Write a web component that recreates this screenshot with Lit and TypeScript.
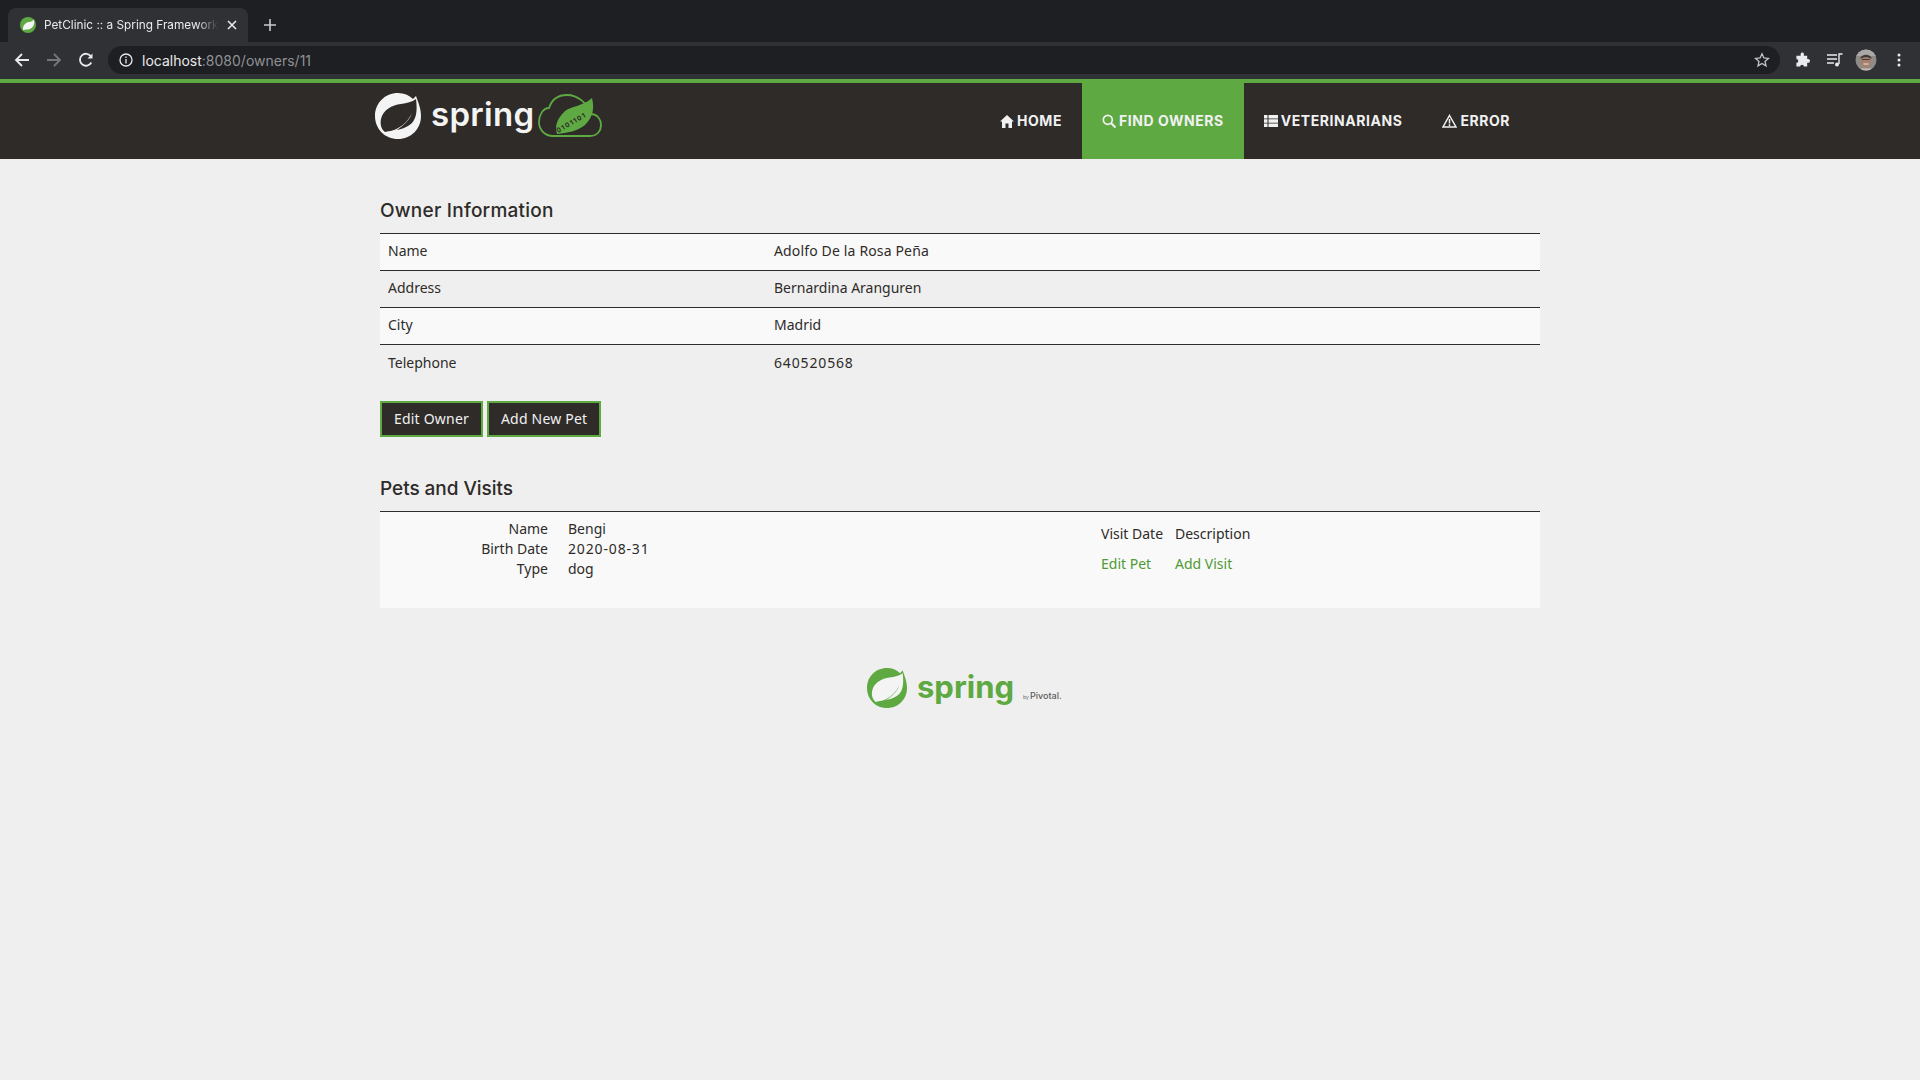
import { css, html, LitElement, svg } from "lit";
import { customElement } from "lit/decorators.js";

/** Leaf mark of the spring logo, drawn in a 46x46 box */
const leafMark = (disc: string, leaf: string) => svg`
  <path fill="${disc}" d="M41 3 C43 9 46 15 46 23 C46 36 36 46 23 46 C10 46 0 36 0 23 C0 10 10 0 23 0 C29 0 34 2 38 6 C39 5 40 4 41 3 Z" />
  <path fill="${leaf}" d="M41 6 C42 14 42.500 24 37 30 C30 37 19 37 10 39 C6 36 5 31 6 26 C8 17 17 12 26 11 C32 10 37 9 41 6 Z" />
  <path fill="${disc}" d="M8 41 C17 38 30 35 37 20 C34 30 22 38 11 42 Z" />
`;

@customElement("browser-chrome")
export class BrowserChrome extends LitElement {
  static styles = css`
    :host {
      display: block;
      font-family: "Inter", "Roboto", sans-serif;
      color: #e8eaed;
    }

    .tabstrip {
      height: 42px;
      box-sizing: border-box;
      background: #1e1f22;
      padding: 8px 0 0 8px;
      display: flex;
      align-items: stretch;
    }

    .tab {
      width: 240px;
      box-sizing: border-box;
      background: #303135;
      border-radius: 8px 8px 0 0;
      padding: 0 10px 0 12px;
      display: flex;
      align-items: center;
      gap: 8px;
    }

    .tab-title {
      flex: 1;
      font-size: 11.8px;
      white-space: nowrap;
      overflow: hidden;
      -webkit-mask-image: linear-gradient(to right, #000 88%, transparent);
      mask-image: linear-gradient(to right, #000 88%, transparent);
    }

    .new-tab {
      margin: 0 0 0 15px;
      display: flex;
      align-items: center;
    }

    .toolbar {
      height: 37px;
      box-sizing: border-box;
      background: #303135;
      display: flex;
      align-items: center;
      padding: 0 0 1px 14px;
    }

    .nav-btns {
      display: flex;
      align-items: center;
      gap: 16px;
      width: 94px;
    }

    .omnibox {
      flex: 1;
      height: 28px;
      background: #1e1f22;
      border-radius: 14px;
      display: flex;
      align-items: center;
      padding: 0 10px 0 11px;
      font-size: 14px;
    }

    .url {
      margin-left: 9px;
      flex: 1;
    }

    .url span {
      color: #8e9196;
    }

    .actions {
      width: 140px;
      box-sizing: border-box;
      padding-left: 15px;
      display: flex;
      align-items: center;
    }

    .actions svg {
      display: block;
    }

    .actions .queue {
      margin-left: 16px;
    }

    .actions .avatar {
      margin-left: 11px;
    }

    .actions .more {
      margin-left: 20px;
    }
  `;

  render() {
    return html`
      <div class="tabstrip">
        <div class="tab">
          <svg width="16" height="16" viewBox="0 0 16 16">
            <circle cx="8" cy="8" r="8" fill="#5ea942" />
            <path fill="#f4f4f4" d="M14 2.500 C15 7 13 12 8 12.500 C6 12.700 4 12.500 3 13 C2.500 9 5 5.500 9 5 C11 4.700 13 4 14 2.500 Z" />
          </svg>
          <span class="tab-title">PetClinic :: a Spring Framework</span>
          <svg width="12" height="12" viewBox="0 0 12 12">
            <path d="M2 2 L10 10 M10 2 L2 10" stroke="#e8eaed" stroke-width="1.600" />
          </svg>
        </div>
        <div class="new-tab">
          <svg width="14" height="14" viewBox="0 0 14 14">
            <path d="M7 1 V13 M1 7 H13" stroke="#c9cacc" stroke-width="1.600" />
          </svg>
        </div>
      </div>
      <div class="toolbar">
        <div class="nav-btns">
          <svg width="16" height="16" viewBox="0 0 16 16" fill="none" stroke="#e8eaed" stroke-width="1.800">
            <path d="M15 8 H2 M8 2 L2 8 L8 14" />
          </svg>
          <svg width="16" height="16" viewBox="0 0 16 16" fill="none" stroke="#74767a" stroke-width="1.800">
            <path d="M1 8 H14 M8 2 L14 8 L8 14" />
          </svg>
          <svg width="16" height="16" viewBox="0 0 16 16" fill="none" stroke="#e8eaed" stroke-width="1.800">
            <path d="M13.300 10.500 A6 6 0 1 1 13 4.500" />
            <path d="M14.500 1.500 V6.500 H9.500 Z" fill="#e8eaed" stroke="none" />
          </svg>
        </div>
        <div class="omnibox">
          <svg width="14" height="14" viewBox="0 0 14 14" fill="none" stroke="#e8eaed" stroke-width="1.300">
            <circle cx="7" cy="7" r="6" />
            <path d="M7 6 V10.500 M7 3.400 V5" />
          </svg>
          <div class="url">localhost<span>:8080/owners/11</span></div>
          <svg width="16" height="16" viewBox="0 0 16 16" fill="none" stroke="#c4c5c7" stroke-width="1.300">
            <path d="M8 1.800 L9.900 6 L14.400 6.400 L11 9.400 L12 13.900 L8 11.500 L4 13.900 L5 9.400 L1.600 6.400 L6.100 6 Z" />
          </svg>
        </div>
        <div class="actions">
          <svg width="15" height="16" viewBox="0 0 16 16">
            <path fill="#e8eaed" d="M6 1.500 A1.800 1.800 0 0 1 9.500 1.500 V3.500 H13 V7 H14 A1.900 1.900 0 0 1 14 11 H13 V15 H9.500 A2 2 0 0 0 5.500 15 H1.500 V11 A2 2 0 0 0 1.500 7 V3.500 H6 Z" />
          </svg>
          <svg class="queue" width="18" height="16" viewBox="0 0 18 16" fill="none" stroke="#e8eaed" stroke-width="1.400">
            <path d="M1 3 H11 M1 7 H11 M1 11 H8" />
            <path d="M13 12 V2 H16.500" />
            <circle cx="11" cy="12.500" r="2" fill="#e8eaed" stroke="none" />
          </svg>
          <svg class="avatar" width="22" height="22" viewBox="0 0 22 22">
            <defs>
              <clipPath id="avatar-clip"><circle cx="11" cy="11" r="10.500" /></clipPath>
            </defs>
            <g clip-path="url(#avatar-clip)">
              <rect width="22" height="22" fill="#8f8b87" />
              <rect width="22" height="7" fill="#aaa8a6" />
              <ellipse cx="11" cy="12" rx="5" ry="6.800" fill="#a9806c" />
              <path d="M5.500 10 C5 4.500 17 4.500 16.500 10 C14 7.500 8 7.500 5.500 10 Z" fill="#3d3a3a" />
              <path d="M7 10.500 H15" stroke="#4a3a34" stroke-width="1.200" />
              <path d="M8.500 15 H13.500" stroke="#efe5de" stroke-width="1" />
              <rect y="19.500" width="22" height="3" fill="#c9bdb8" />
            </g>
          </svg>
          <svg class="more" width="4" height="14" viewBox="0 0 4 14" fill="#e8eaed">
            <circle cx="2" cy="2" r="1.500" />
            <circle cx="2" cy="7" r="1.500" />
            <circle cx="2" cy="12" r="1.500" />
          </svg>
        </div>
      </div>
    `;
  }
}

@customElement("app-root")
export class AppRoot extends LitElement {
  static styles = css`
    :host {
      display: block;
      min-height: 1080px;
      background: #efefef;
      font-family: "Noto Sans", "Open Sans", sans-serif;
      font-size: 14px;
      color: #2e2b29;
    }

    .navbar {
      height: 80px;
      box-sizing: border-box;
      background: #2e2b29;
      border-top: 4px solid #5ea942;
      display: flex;
      justify-content: center;
    }

    .navbar-inner {
      width: 1170px;
      box-sizing: border-box;
      padding-right: 15px;
      display: flex;
      justify-content: space-between;
    }

    .brand {
      display: block;
      margin-top: 10px;
    }

    .nav-items {
      display: flex;
    }

    .nav-item {
      display: flex;
      align-items: center;
      gap: 3px;
      padding: 0 20px 1px;
      font-family: "Inter", "Roboto", sans-serif;
      font-weight: 700;
      font-size: 14px;
      letter-spacing: 0.55px;
      color: #f1f1f1;
      text-transform: uppercase;
      white-space: nowrap;
    }

    .nav-item.active {
      background: #5ea942;
    }

    .container {
      width: 1160px;
      margin: 0 auto;
      padding-top: 31px;
    }

    h2 {
      margin: 0;
      height: 44px;
      line-height: 42px;
      font-family: "Inter", "Roboto", sans-serif;
      font-size: 19px;
      font-weight: 500;
      letter-spacing: 0.25px;
      color: #2e2b29;
      border-bottom: 1px solid #2e2b29;
      box-sizing: border-box;
    }

    h2.pets-title {
      letter-spacing: -0.05px;
    }

    .row {
      display: grid;
      grid-template-columns: 386px 1fr;
      height: 37px;
      box-sizing: border-box;
      align-items: center;
      padding: 0 8px 3px;
      border-bottom: 1px solid #2e2b29;
    }

    .row:nth-child(odd) {
      background: #f9f9f9;
    }

    .row:last-child {
      border-bottom: none;
    }

    .wide {
      letter-spacing: 0.15px;
    }

    .num {
      letter-spacing: 0.85px;
    }

    .buttons {
      display: flex;
      gap: 4px;
      margin: 19px 0 31px;
    }

    .btn {
      box-sizing: border-box;
      height: 36px;
      border: 2px solid #5ea942;
      background: #2e2b29;
      color: #f1f1f1;
      display: flex;
      align-items: center;
      padding: 0 12px 2px;
      font: inherit;
      letter-spacing: 0.2px;
    }

    .pets {
      background: #f9f9f9;
      height: 96px;
      box-sizing: border-box;
      display: flex;
      line-height: 20px;
    }

    .pet-info {
      width: 721px;
      box-sizing: border-box;
      padding-top: 7px;
      display: grid;
      grid-template-columns: 168px 1fr;
      grid-auto-rows: 20px;
      column-gap: 20px;
    }

    .pet-info .label {
      text-align: right;
    }

    .visits {
      display: grid;
      grid-template-columns: 74px auto;
      grid-auto-rows: 30px;
      padding-top: 12px;
      align-content: start;
    }

    a {
      color: #4f9a35;
      text-decoration: none;
    }

    .footer-logo {
      display: block;
      margin: 60px auto 0;
    }
  `;

  render() {
    return html`
      <browser-chrome></browser-chrome>
      <nav class="navbar">
        <div class="navbar-inner">
          ${this.renderBrand()}
          <div class="nav-items">
            <div class="nav-item">
              <svg width="14" height="14" viewBox="0 0 14 14" fill="#f1f1f1">
                <path d="M7 1 L14 7.500 H12 V14 H8.500 V9.500 H5.500 V14 H2 V7.500 H0 Z" />
              </svg>
              Home
            </div>
            <div class="nav-item active">
              <svg width="14" height="14" viewBox="0 0 14 14" fill="none" stroke="#f1f1f1" stroke-width="1.700">
                <circle cx="5.800" cy="5.800" r="4.500" />
                <path d="M9 9 L13.500 13.500" stroke-width="2.200" />
              </svg>
              Find owners
            </div>
            <div class="nav-item">
              <svg width="14" height="14" viewBox="0 0 14 14" fill="#f1f1f1">
                <path d="M0 1 H3.500 V4.500 H0 Z M4.500 1 H14 V4.500 H4.500 Z M0 5.300 H3.500 V8.700 H0 Z M4.500 5.300 H14 V8.700 H4.500 Z M0 9.500 H3.500 V13 H0 Z M4.500 9.500 H14 V13 H4.500 Z" />
              </svg>
              Veterinarians
            </div>
            <div class="nav-item">
              <svg width="15" height="14" viewBox="0 0 15 14" fill="none" stroke="#f1f1f1" stroke-width="1.500">
                <path d="M7.500 1.500 L14 13 H1 Z" />
                <path d="M7.500 5 V9.500 M7.500 10.300 V12" />
              </svg>
              Error
            </div>
          </div>
        </div>
      </nav>
      <main class="container">
        <h2>Owner Information</h2>
        <div class="owner">
          <div class="row"><span>Name</span><span class="wide">Adolfo De la Rosa Peña</span></div>
          <div class="row"><span>Address</span><span>Bernardina Aranguren</span></div>
          <div class="row"><span>City</span><span>Madrid</span></div>
          <div class="row"><span>Telephone</span><span class="num">640520568</span></div>
        </div>
        <div class="buttons">
          <button class="btn">Edit Owner</button>
          <button class="btn">Add New Pet</button>
        </div>
        <h2 class="pets-title">Pets and Visits</h2>
        <div class="pets">
          <div class="pet-info">
            <span class="label">Name</span><span>Bengi</span>
            <span class="label">Birth Date</span><span class="num">2020-08-31</span>
            <span class="label">Type</span><span>dog</span>
          </div>
          <div class="visits">
            <span>Visit Date</span><span>Description</span>
            <a href="#">Edit Pet</a><a href="#">Add Visit</a>
          </div>
        </div>
        ${this.renderFooterLogo()}
      </main>
    `;
  }

  renderBrand() {
    return html`
      <svg class="brand" width="232" height="48" viewBox="0 0 232 48">
        ${leafMark("#f4f4f4", "#2e2b29")}
        <text x="56" y="33" font-family="Inter, sans-serif" font-weight="600" font-size="33" letter-spacing="0.3" fill="#f4f4f4">spring</text>
        <path fill="none" stroke="#5ea942" stroke-width="1.800" d="M178 43 H215 C222 43 226 38 226 32 C226 26 222 21 216 21 C212 10 203 2 192 2 C184 2 177 6 174 15 C168 15 164 22 164 29 C164 37 170 43 178 43 Z" />
        <path fill="#5ea942" d="M217 5 C220 17 217 25 210 32 C203 38 192 40 182 41 C180 33 181 27 190 18 C197 13 208 13 217 5 Z" />
        <text x="183" y="40" font-family="Inter, sans-serif" font-weight="700" font-size="6.500" letter-spacing="1.300" fill="#2e2b29" transform="rotate(-30 183 40)">0101101</text>
      </svg>
    `;
  }

  renderFooterLogo() {
    return html`
      <svg class="footer-logo" width="212" height="44" viewBox="0 0 212 44">
        <g transform="translate(13 0) scale(0.87)">${leafMark("#5ea942", "#f4f4f4")}</g>
        <text x="63" y="30" font-family="Inter, sans-serif" font-weight="700" font-size="31" fill="#5ea942">spring</text>
        <text x="169" y="31" font-family="Inter, sans-serif" font-size="5" fill="#6a6a6a">by</text>
        <text x="176" y="31" font-family="Inter, sans-serif" font-weight="500" font-size="9" fill="#5c5c5c">Pivotal.</text>
      </svg>
    `;
  }
}
